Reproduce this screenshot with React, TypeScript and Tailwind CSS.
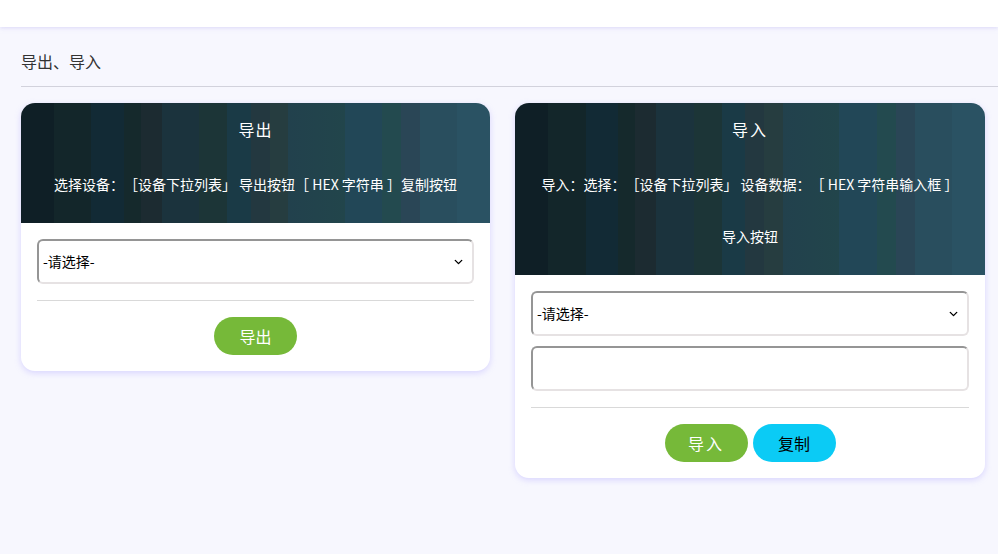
import React, { useState } from 'react';
import { ChevronDown } from 'lucide-react';

const headerBg =
  "bg-[linear-gradient(90deg,#0f1f26_0%,#0f1f26_7%,#13262a_7%,#13262a_15%,#122a35_15%,#122a35_22%,#15292c_22%,#15292c_25.5%,#1c2b31_25.5%,#1c2b31_30%,#1b333d_30%,#1b333d_38%,#1c3537_38%,#1c3537_44%,#1a3a46_44%,#1a3a46_49%,#233840_49%,#233840_53%,#263d40_53%,#263d40_57%,#22414d_57%,#22454b_69%,#224757_69%,#224757_77%,#234a4f_77%,#234a4f_81%,#2a4656_81%,#2a4656_85%,#294e5e_85%,#294e5e_93%,#2a5263_93%,#2a5263_100%)]";

const font = { fontFamily: '"Noto Sans CJK SC", "Noto Sans", sans-serif' };

const DeviceSelect: React.FC = () => {
  const [device, setDevice] = useState('');
  return (
    <div className="relative">
      <select
        value={device}
        onChange={(e) => setDevice(e.target.value)}
        className="w-full h-[45px] appearance-none rounded-[6px] border-2 border-t-[#959595] border-l-[#959595] border-b-[#e6e2e3] border-r-[#e6e2e3] bg-white pl-[4px] pr-8 text-[14px] text-black outline-none"
      >
        <option value="">-请选择-</option>
      </select>
      <ChevronDown className="pointer-events-none absolute right-[9px] top-1/2 -translate-y-1/2 w-[13px] h-[13px] text-black" strokeWidth={2.5} />
    </div>
  );
};

const ExportCard: React.FC = () => (
  <div className="w-[469px] rounded-[14px] bg-white overflow-hidden shadow-[0_2px_6px_rgba(160,150,255,0.35)]">
    <div className={`${headerBg} text-white text-center pt-[14px] pb-[29px]`}>
      <p className="text-[16px] leading-[24px] tracking-[1px]">导出</p>
      <p className="mt-[33px] text-[14px] leading-[20px]">选择设备：［设备下拉列表」 导出按钮［ HEX 字符串 ］复制按钮</p>
    </div>
    <div className="p-4">
      <DeviceSelect />
      <div className="mt-4 border-t border-[#d9d9d9]" />
      <div className="mt-4 flex justify-center">
        <button className="w-[83px] h-[38px] rounded-full bg-[#76b939] text-white text-[16px]">导出</button>
      </div>
    </div>
  </div>
);

const ImportCard: React.FC = () => {
  const [hex, setHex] = useState('');
  return (
    <div className="w-[470px] rounded-[14px] bg-white overflow-hidden shadow-[0_2px_6px_rgba(160,150,255,0.35)]">
      <div className={`${headerBg} text-white text-center pt-[14px] pb-[29px]`}>
        <p className="text-[16px] leading-[24px] tracking-[2px]">导入</p>
        <p className="mt-[33px] text-[14px] leading-[20px]">导入：选择：［设备下拉列表」 设备数据：［ HEX 字符串输入框 ］</p>
        <p className="mt-[32px] text-[14px] leading-[20px]">导入按钮</p>
      </div>
      <div className="p-4">
        <DeviceSelect />
        <input
          value={hex}
          onChange={(e) => setHex(e.target.value)}
          className="mt-[10px] w-full h-[45px] rounded-[6px] border-2 border-t-[#959595] border-l-[#959595] border-b-[#e6e2e3] border-r-[#e6e2e3] bg-white px-2 text-[14px] outline-none"
        />
        <div className="mt-4 border-t border-[#d9d9d9]" />
        <div className="mt-4 flex justify-center gap-[5px]">
          <button className="w-[83px] h-[38px] rounded-full bg-[#76b939] text-white text-[16px] tracking-[2px]">导入</button>
          <button className="w-[83px] h-[38px] rounded-full bg-[#0bcbf5] text-black text-[16px]">复制</button>
        </div>
      </div>
    </div>
  );
};

export default function App() {
  return (
    <div className="min-h-[554px] bg-[#f7f7fe] [text-spacing-trim:space-all]" style={font}>
      <div className="h-[27px] bg-white shadow-[0_1px_4px_rgba(200,195,245,0.6)]" />
      <div className="ml-[21px] pt-[23px]">
        <h1 className="text-[16px] leading-[22px] text-[#333]">导出、导入</h1>
        <div className="mt-[14px] border-t border-[#d2d2dc]" />
        <div className="mt-4 flex items-start gap-[25px]">
          <ExportCard />
          <ImportCard />
        </div>
      </div>
    </div>
  );
}
